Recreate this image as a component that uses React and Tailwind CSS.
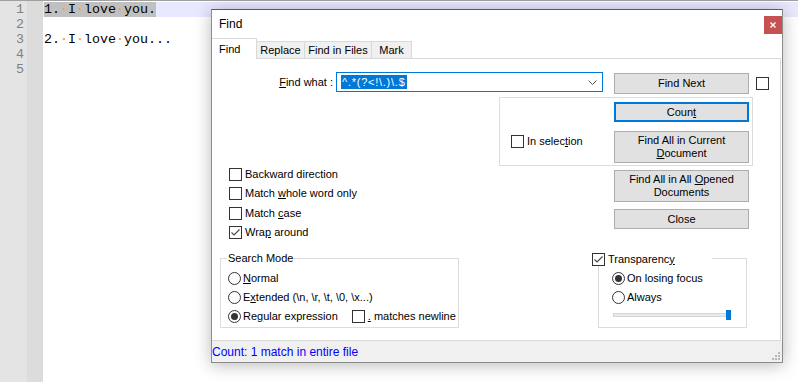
import clsx from 'clsx'

const ui = "font-['Liberation_Sans',Arial,sans-serif]"
const mono = "font-['Liberation_Mono','DejaVu_Sans_Mono',monospace]"

function Box({ checked = false }) {
  return (
    <span className="w-[13px] h-[13px] border border-[#333] bg-white flex items-center justify-center shrink-0">
      {checked && (
        <svg width="11" height="11" viewBox="0 0 11 11">
          <path d="M1.5 5.5 L4 8 L9.5 2.5" fill="none" stroke="#444" strokeWidth="1.1" />
        </svg>
      )}
    </span>
  )
}

function Radio({ on = false }) {
  return (
    <span className="w-[13px] h-[13px] rounded-full border border-[#333] bg-white flex items-center justify-center shrink-0">
      {on && <span className="w-[7px] h-[7px] rounded-full bg-[#333]" />}
    </span>
  )
}

function Btn({ children, className, focused = false }) {
  return (
    <div
      className={clsx(
        'w-[135px] bg-[#e1e1e1] flex items-center justify-center text-center leading-[13px]',
        focused ? 'border-2 border-[#0078d7]' : 'border border-[#adadad]',
        className
      )}
    >
      <span>{children}</span>
    </div>
  )
}

function Dot() {
  return <span className="text-[#ff9d3c] font-bold">·</span>
}

function Editor() {
  const nums = [1, 2, 3, 4, 5]
  return (
    <div className={clsx('flex h-full border-t border-[#a0a0a0]', mono, 'text-[13.33px] leading-[15px]')}>
      <div className="w-[27px] bg-[#e4e4e4] pt-[1px] text-right pr-[3px] text-[#808080]">
        {nums.map((n) => (
          <div key={n} className="h-[15px]">{n}</div>
        ))}
      </div>
      <div className="w-[16px] bg-[#dcdcdc]" />
      <div className="flex-1 pt-[1px] bg-white">
        <div className="h-[15px] bg-[#e8e8ff] pl-[1px] whitespace-pre">
          <span className="bg-[#c0c0c0]">
            1.<Dot />I<Dot />love<Dot />you.
          </span>
        </div>
        <div className="h-[15px]" />
        <div className="h-[15px] pl-[1px] whitespace-pre">
          2.<Dot />I<Dot />love<Dot />you...
        </div>
      </div>
    </div>
  )
}

function CheckRow({ checked, children, className }) {
  return (
    <div className={clsx('flex items-center h-[13px] gap-[3px]', className)}>
      <Box checked={checked} />
      <span className="leading-[13px]">{children}</span>
    </div>
  )
}

function RadioRow({ on, children, className }) {
  return (
    <div className={clsx('flex items-center h-[13px] gap-[2px]', className)}>
      <Radio on={on} />
      <span className="leading-[13px]">{children}</span>
    </div>
  )
}

function FindDialog() {
  return (
    <div
      className={clsx(
        'absolute left-[211px] top-[9px] w-[572px] h-[354px] bg-white border border-[#8c8c8c] border-t-[#5a5a5a] shadow-[0_2px_16px_rgba(0,0,0,0.28)] flex flex-col text-[11px] text-black',
        ui
      )}
    >
      {/* title bar */}
      <div className="h-[28px] flex items-start justify-between">
        <span className="pl-[7px] pt-[6px] text-[12px] leading-[16px]">Find</span>
        <div className="mt-[6px] w-[18px] h-[18px] bg-[#c75050] flex items-center justify-center">
          <svg width="6" height="6" viewBox="0 0 6 6">
            <path d="M0.5 0.5 L5.5 5.5 M5.5 0.5 L0.5 5.5" stroke="white" strokeWidth="1.4" />
          </svg>
        </div>
      </div>

      {/* tabs */}
      <div className="h-[20px] flex items-end">
        <div className="relative z-10 w-[45px] h-[21px] -mb-[1px] bg-white border-t border-r border-[#d9d9d9] pl-[7px] pt-[3px] leading-[14px]">
          Find
        </div>
        <div className="w-[48px] h-[17px] bg-[#f0f0f0] border-t border-r border-[#d9d9d9] flex items-center justify-center">
          Replace
        </div>
        <div className="w-[67px] h-[17px] bg-[#f0f0f0] border-t border-r border-[#d9d9d9] flex items-center justify-center">
          Find in Files
        </div>
        <div className="w-[40px] h-[17px] bg-[#f0f0f0] border-t border-r border-[#d9d9d9] flex items-center justify-center">
          Mark
        </div>
      </div>

      {/* tab panel */}
      <div className="w-[569px] h-[283px] border-t border-r border-b border-[#d9d9d9] flex flex-col">
        {/* find what row */}
        <div className="mt-[13px] flex items-start">
          <div className="w-[121px] h-[20px] leading-[20px] text-right">
            <u>F</u>ind what :
          </div>
          <div className="ml-[3px] w-[267px] h-[20px] border border-[#0078d7] flex items-center">
            <span className="ml-[4px] bg-[#0078d7] text-white leading-[14px] tracking-[0.75px] px-[1px]">
              ^.*(?&lt;!\.)\.$
            </span>
            <svg className="ml-auto mr-[5px]" width="9" height="5" viewBox="0 0 9 5">
              <path d="M0.5 0.5 L4.5 4.5 L8.5 0.5" fill="none" stroke="#555" strokeWidth="1" />
            </svg>
          </div>
          <Btn className="ml-[11px] mt-[1px] h-[21px]">Find Next</Btn>
          <div className="ml-[7px] mt-[5px]">
            <Box />
          </div>
        </div>

        {/* in selection group */}
        <div className="mt-[3px] ml-[287px] w-[254px] h-[69px] border border-[#dcdcdc] flex justify-between pl-[11px] pr-[3px] pt-[4px]">
          <CheckRow className="mt-[33px]">
            In selec<u>t</u>ion
          </CheckRow>
          <div className="flex flex-col">
            <Btn focused className="h-[20px]">
              Coun<u>t</u>
            </Btn>
            <Btn className="mt-[9px] h-[32px]">
              Find All in Current
              <br />
              <u>D</u>ocument
            </Btn>
          </div>
        </div>

        {/* options + more buttons */}
        <div className="flex items-start">
          <div className="ml-[17px] w-[385px] mt-[2px] flex flex-col">
            <CheckRow>Backward direction</CheckRow>
            <CheckRow className="mt-[6px]">
              Match <u>w</u>hole word only
            </CheckRow>
            <CheckRow className="mt-[7px]">
              Match <u>c</u>ase
            </CheckRow>
            <CheckRow checked className="mt-[6px]">
              Wra<u>p</u> around
            </CheckRow>
          </div>
          <div className="mt-[4px] flex flex-col">
            <Btn className="h-[32px]">
              Find All in All <u>O</u>pened
              <br />
              Documents
            </Btn>
            <Btn className="mt-[7px] h-[20px]">Close</Btn>
          </div>
        </div>

        {/* search mode + transparency */}
        <div className="flex items-start">
          <div className="relative ml-[8px] mt-[19px] w-[239px] h-[70px] border border-[#dcdcdc] pl-[7px] pt-[13px] flex flex-col gap-[6px]">
            <span className="absolute left-[6px] top-[-8px] bg-white px-[1px] leading-[14px]">Search Mode</span>
            <RadioRow>
              <u>N</u>ormal
            </RadioRow>
            <RadioRow>
              E<u>x</u>tended (\n, \r, \t, \0, \x...)
            </RadioRow>
            <div className="flex items-center">
              <RadioRow on>
                Re<u>g</u>ular expression
              </RadioRow>
              <CheckRow className="ml-[14px]">
                <u>.</u> matches newline
              </CheckRow>
            </div>
          </div>

          <div className="relative ml-[133px] mt-[13px] w-[155px] h-[76px]">
            <div className="ml-[6px] mt-[6px] w-[149px] h-[70px] border border-[#dcdcdc] pl-[13px] pt-[13px] flex flex-col">
              <RadioRow on>On losing focus</RadioRow>
              <RadioRow className="mt-[6px]">Always</RadioRow>
              <div className="relative mt-[6px] ml-[1px] w-[118px] h-[10px] flex items-center">
                <div className="w-full h-[4px] bg-[#e7eaea] border border-[#d6d6d6]" />
                <div className="absolute right-0 top-0 w-[5px] h-[10px] bg-[#0078d7]" />
              </div>
            </div>
            <div className="absolute left-0 top-0 w-[120px] bg-white flex items-center h-[14px]">
              <CheckRow checked>
                Transparenc<u>y</u>
              </CheckRow>
            </div>
          </div>
        </div>
      </div>

      {/* status bar */}
      <div className="relative h-[21px] bg-[#f0f0f0] flex items-center">
        <span className="text-[12px] text-[#0000ff] leading-[14px]">Count: 1 match in entire file</span>
        <svg className="absolute right-[1px] bottom-[1px]" width="9" height="9" viewBox="0 0 9 9">
          <g fill="#b8b8b8">
            <rect x="6" y="0" width="2" height="2" />
            <rect x="3" y="3" width="2" height="2" />
            <rect x="6" y="3" width="2" height="2" />
            <rect x="0" y="6" width="2" height="2" />
            <rect x="3" y="6" width="2" height="2" />
            <rect x="6" y="6" width="2" height="2" />
          </g>
        </svg>
      </div>
    </div>
  )
}

export default function App() {
  return (
    <div className="relative w-[798px] h-[382px] overflow-hidden bg-white">
      <Editor />
      <FindDialog />
    </div>
  )
}
